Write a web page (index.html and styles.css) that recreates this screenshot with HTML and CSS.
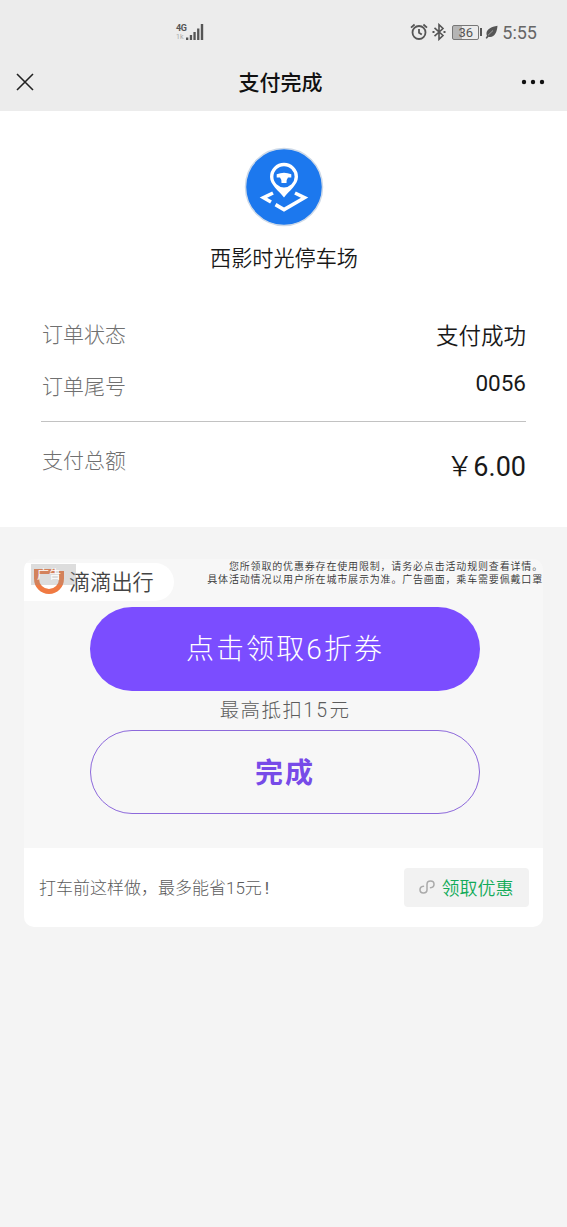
FILE: index.html
```html
<!DOCTYPE html>
<html lang="zh-CN">
<head>
<meta charset="utf-8">
<title>支付完成</title>
<link rel="stylesheet" href="styles.css">
</head>
<body>
<header class="header">
  <div class="status">
    <div class="signal">
      <div class="network"><span class="gen">4G</span><span class="rate">1k</span></div>
      <svg width="18" height="18" viewBox="0 0 18 18" fill="#555"><path d="M0 14.5h2.3V17H0zM3.8 12h2.3v5H3.8zM7.4 9h2.3v8H7.4zM11.1 5.500h2.300V17h-2.300zM14.800 1h2.400v16h-2.400z"/></svg>
    </div>
    <div class="system">
      <svg class="alarm" width="18" height="18" viewBox="0 0 18 18" fill="none" stroke="#555" stroke-width="1.8"><circle cx="9" cy="9.500" r="6.500"/><path d="M9 6v3.800l2.800 1.800M1 4.600 4.600 1.500M17 4.600 13.400 1.500"/></svg>
      <svg class="bluetooth" width="14" height="18" viewBox="0 0 14 18" fill="none" stroke="#555" stroke-width="1.600"><path d="M2.500 4.800 11 12.500 7 16.300V1.700L11 5.500 2.500 13.200"/><path d="M.5 9h2M11.500 9h2" stroke-width="2"/></svg>
      <div class="battery"><span>36</span></div><i class="battery-tip"></i>
      <svg class="leaf" width="13" height="14" viewBox="0 0 13 14" fill="#555"><path d="M12.500.8C12 7.500 9.500 13 3.600 11.800L1.800 13.800.6 12.900 2 10.800C-.3 5.500 5 2 12.500.8Z"/><path d="M3 10.300 8 5.500" stroke="#ececec" stroke-width=".5"/></svg>
      <span class="clock">5:55</span>
    </div>
  </div>
  <nav class="nav">
    <svg class="close" width="18" height="18" viewBox="0 0 18 18" stroke="#222" stroke-width="1.600"><path d="M1 1 17 17M17 1 1 17"/></svg>
    <h1 class="title">支付完成</h1>
    <svg class="more" width="24" height="6" viewBox="0 0 24 6" fill="#111"><circle cx="3" cy="3" r="2.200"/><circle cx="12" cy="3" r="2.200"/><circle cx="21" cy="3" r="2.200"/></svg>
  </nav>
</header>

<main>
  <section class="order">
    <svg class="avatar" width="80" height="80" viewBox="0 0 80 80">
      <circle cx="40" cy="40" r="38.500" fill="#1c78ee" stroke="#cdd9e8" stroke-width="1.500"/>
      <path d="M29 46 19.500 50.700 27 55M31.500 57.600 40 62.600 60.500 50.700 51 46" fill="none" stroke="#fff" stroke-width="3.600"/>
      <path fill="#fff" fill-rule="evenodd" d="M40 50.500C35 44 26 37.800 26 29.800a14 14 0 0 1 28 0C54 37.800 45 44 40 50.500ZM40 19.200a10.600 10.600 0 1 0 0 21.200 10.600 10.600 0 0 0 0-21.200Z"/>
      <path fill="#fff" d="M32.700 27.300Q40 24 47.300 27.300V30.500H44Q42.500 32 42.500 36H37.500Q37.500 32 36 30.500H32.700Z"/>
    </svg>
    <h2 class="merchant">西影时光停车场</h2>
    <dl class="details">
      <div class="row"><dt>订单状态</dt><dd>支付成功</dd></div>
      <div class="row number"><dt>订单尾号</dt><dd>0056</dd></div>
      <div class="row total"><dt>支付总额</dt><dd>￥<span class="amount">6.00</span></dd></div>
    </dl>
  </section>

  <section class="promo">
    <div class="banner">
      <div class="banner-head">
        <div class="brand">
          <svg class="didi" width="30" height="26" viewBox="0 0 30 26" fill="none" stroke="#f07a42" stroke-width="5"><path d="M2.500 2.500H21M2.500 0v9.500C2.500 17 8 22.500 15 22.500S27.500 17 27.500 9.500V2"/></svg>
          <span class="brand-name">滴滴出行</span>
          <span class="ad-tag">广告</span>
        </div>
        <p class="terms">您所领取的优惠券存在使用限制，请务必点击活动规则查看详情。<br>具体活动情况以用户所在城市展示为准。广告画面，乘车需要佩戴口罩</p>
      </div>
      <button class="pill claim">点击领取6折券</button>
      <p class="limit">最高抵扣<span class="digits">15</span>元</p>
      <button class="pill done">完成</button>
    </div>
    <div class="caption">
      <span class="slogan">打车前这样做，最多能省<span class="saving">15</span>元<span class="bang">!</span></span>
      <button class="coupon">
        <svg width="16" height="16" viewBox="0 0 16 16" fill="none" stroke="#aaa" stroke-width="1.500" stroke-linecap="round"><path d="M4.500 7.300C2.500 7.500 1 8.900 1 10.800s1.500 3.200 3.400 3.200S8 12.700 8 10.800V5.200C8 3.300 9.500 2 11.500 2S15 3.300 15 5.200s-1.500 3.300-3.500 3.500"/></svg>
        <span>领取优惠</span>
      </button>
    </div>
  </section>
</main>
</body>
</html>
```
FILE: styles.css
```css
* { box-sizing: border-box; }
body {
  margin: 0;
  min-height: 1227px;
  background: #f4f4f4;
  color: #191919;
  font-family: Roboto, "Noto Sans CJK SC", sans-serif;
  font-weight: 350;
}
h1, h2, p, dl, dd { margin: 0; }
button { border: 0; padding: 0; font-family: inherit; font-weight: inherit; }
svg { display: block; flex: none; }

.header { height: 111px; background: #ececec; }
.status {
  height: 64px;
  padding: 0 30px 0 176px;
  display: flex;
  justify-content: space-between;
  align-items: center;
  color: #555;
  font-weight: 400;
}
.signal { display: flex; align-items: center; }
.network { width: 10px; display: flex; flex-direction: column; }
.gen { font-size: 9px; line-height: 10px; font-weight: 700; letter-spacing: -.5px; }
.rate { font-size: 7px; line-height: 8px; color: #aaa; }
.system { display: flex; align-items: center; }
.bluetooth { margin-left: 4px; }
.battery {
  width: 27px;
  height: 15px;
  margin-left: 6px;
  border: 1px solid #777;
  border-radius: 2px;
  background: linear-gradient(90deg, #b5b5b5 36%, transparent 36%);
  font-size: 13px;
  line-height: 13px;
  text-align: center;
}
.battery-tip { width: 2px; height: 8px; margin-left: 1px; background: #555; }
.leaf { margin-left: 3px; }
.clock { margin-left: 4px; padding-top: 1px; font-size: 18px; line-height: 20px; color: #666; }

.nav {
  height: 37px;
  padding: 0 22px 0 16px;
  display: grid;
  grid-template-columns: 1fr auto 1fr;
  align-items: center;
}
.close, .more { margin-bottom: 1px; }
.title { padding-top: 1px; font-size: 21px; line-height: 30px; font-weight: 500; color: #111; }
.more { justify-self: end; }

.order {
  height: 416px;
  padding: 36px 41px 0;
  background: #fff;
}
.avatar { margin: 0 auto; }
.merchant { margin-top: 17px; padding-left: 1px; font-size: 21.150px; line-height: 30px; font-weight: 350; text-align: center; }
.details { margin-top: 46px; }
.row { height: 52px; display: flex; justify-content: space-between; align-items: flex-start; }
.row dt { padding-left: 1px; font-size: 21px; line-height: 30px; font-weight: 300; color: #707070; }
.row dd { font-size: 22.5px; line-height: 32px; }
.row.number { height: 50px; border-bottom: 1px solid #c2c2c2; }
.row.number dd { margin-top: -4px; line-height: 30px; font-weight: 400; }
.row.total { padding-top: 24px; }
.row.total dd { margin-top: 1px; font-size: 27px; line-height: 40px; }
.amount { font-weight: 400; }

.promo { margin: 32px 24px 0; border-radius: 10px; overflow: hidden; }
.banner {
  height: 289px;
  background: #f7f7f7;
  display: flex;
  flex-direction: column;
  align-items: center;
}
.banner-head { align-self: stretch; height: 48px; display: flex; justify-content: space-between; }
.brand {
  position: relative;
  width: 150px;
  height: 38px;
  margin-top: 4px;
  padding-left: 10px;
  display: flex;
  align-items: center;
  background: #fff;
  border-radius: 0 19px 19px 0;
}
.brand-name { margin: 2px 0 0 5px; font-size: 21.2px; line-height: 30px; color: #444; }
.ad-tag {
  position: absolute;
  left: 7px;
  top: 1px;
  width: 45px;
  height: 21px;
  background: rgba(150, 150, 150, .32);
  color: #fff;
  font-size: 12px;
  line-height: 22px;
  padding-left: 6px;
}
.terms {
  margin-top: 2px;
  font-size: 10px;
  line-height: 12.500px;
  letter-spacing: .83px;
  text-align: right;
  white-space: nowrap;
  color: #333;
}
.pill { width: 390px; height: 84px; margin-left: 3px; border-radius: 42px; font-size: 28px; letter-spacing: 2.1px; }
.claim { padding-bottom: 4px; background: #7b4dff; color: #fff; font-weight: 300; }
.limit { height: 39px; padding-left: 3px; font-size: 19.500px; line-height: 40px; letter-spacing: 1.400px; font-weight: 300; color: #5c5c5c; }
.digits { letter-spacing: 2.200px; }
.done { padding-bottom: 3px; border: 1px solid #8d69db; background: transparent; color: #774be8; font-weight: 700; }
.caption {
  height: 79px;
  padding: 0 14px 0 15px;
  display: flex;
  align-items: center;
  justify-content: space-between;
  background: #fff;
}
.slogan { font-size: 17px; line-height: 24px; font-weight: 300; color: #5c5c5c; }
.saving { font-weight: 350; }
.bang { margin-left: 3px; font-weight: 400; }
.coupon {
  width: 125px;
  height: 39px;
  padding: 0 1px 1px 0;
  display: flex;
  align-items: center;
  justify-content: center;
  gap: 7px;
  border-radius: 4px;
  background: #f2f2f2;
  color: #13ab59;
  font-size: 18px;
}
```
